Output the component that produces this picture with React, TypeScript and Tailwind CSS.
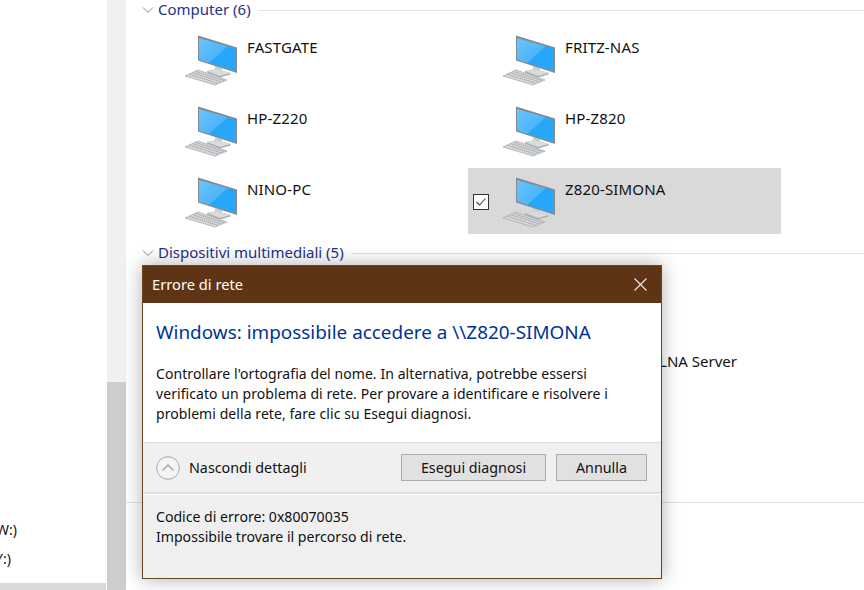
import React from "react";

function Monitor() {
  return (
    <svg width="56" height="56" viewBox="0 0 56 56" className="shrink-0">
      <defs>
        <linearGradient id="scr" x1="0" y1="0" x2="1" y2="1">
          <stop offset="0" stopColor="#6cc4fb" />
          <stop offset="0.5" stopColor="#4db5fa" />
          <stop offset="0.52" stopColor="#25a6f8" />
          <stop offset="1" stopColor="#2aa8fa" />
        </linearGradient>
      </defs>
      <path d="M31 33 L38 35 L38 40 L31 38 Z" fill="#c9ced2" />
      <path d="M23 38 L33 36 L46.500 40 L46.500 41.500 L36 44.500 L23 39.500 Z" fill="#a9adb0" />
      <path d="M23 38 L33 36 L46.500 40 L36 43 Z" fill="#d9dcde" />
      <path d="M14 2.500 L53 14.500 L53 40 L14 27.500 Z" fill="#85898d" />
      <path d="M15 5 L52 15.500 L52 38.500 L15 26.500 Z" fill="url(#scr)" />
      <path d="M1 43 L14 37 L43 47 L31 52 Z" fill="#d6d8da" stroke="#a2a5a8" strokeWidth="0.7" />
      <path d="M6 41.500 L34 50.300 M9.500 40 L37 48.800 M12.500 38.800 L40 47.500" stroke="#8f9295" strokeWidth="0.9" strokeDasharray="1.300 0.800" fill="none" />
    </svg>
  );
}

function Tile({ name, selected }: { name: string; selected?: boolean }) {
  return (
    <div className={`flex h-[66px] w-[313px] ${selected ? "bg-[#d9d9d9]" : ""}`}>
      <div className="flex w-[34px] shrink-0 items-center pl-[5px] pt-[1px]">
        {selected && (
          <div className="flex h-[16px] w-[16px] items-center justify-center border border-[#333333] bg-white">
            <svg width="12" height="10" viewBox="0 0 12 10" fill="none">
              <path d="M1.500 5 L4.500 8 L10.500 1.500" stroke="#444444" strokeWidth="1.100" />
            </svg>
          </div>
        )}
      </div>
      <div className="pt-[7px]">
        <Monitor />
      </div>
      <div className="pl-[7px] pt-[11px] text-[15px] leading-[20px] tracking-[0.15px] text-[#111111]">{name}</div>
    </div>
  );
}

function GroupHeader({ title }: { title: string }) {
  return (
    <div className="flex h-[20px] items-center">
      <svg width="12" height="8" viewBox="0 0 12 8" fill="none" className="ml-[16px] shrink-0">
        <path d="M1 1.500 L6 6.500 L11 1.500" stroke="#8a8a8a" strokeWidth="1" />
      </svg>
      <span className="-mt-[2px] ml-[4px] whitespace-nowrap text-[15px] leading-[20px] text-[#1e3287]">{title}</span>
      <div className="ml-[7px] h-px flex-1 bg-[#e2e2e2]" />
    </div>
  );
}

function Button({ label, className }: { label: string; className: string }) {
  return (
    <div className={`flex h-[27px] items-center justify-center border border-[#adadad] bg-[#e1e1e1] text-[14.3px] text-[#111111] ${className}`}>
      {label}
    </div>
  );
}

export default function App() {
  return (
    <div className="relative flex h-[590px] w-[864px] overflow-hidden bg-white font-['Noto_Sans','Open_Sans',sans-serif]">
      <aside className="flex w-[107px] shrink-0 flex-col pr-px">
        <div className="flex-1" />
        <div className="flex h-[20px] w-[17px] items-center justify-end overflow-hidden whitespace-nowrap text-[14px] text-[#111111]">
          (W:)
        </div>
        <div className="h-[9px]" />
        <div className="flex h-[20px] w-[11px] items-center justify-end overflow-hidden whitespace-nowrap text-[14px] text-[#111111]">
          (Y:)
        </div>
        <div className="h-[15px]" />
        <div className="h-[7px] bg-[#d9d9d9]" />
      </aside>
      <div className="flex w-[19px] shrink-0 flex-col bg-[#f0f0f0]">
        <div className="h-[382px]" />
        <div className="flex-1 bg-[#cdcdcd]" />
      </div>
      <main className="flex-1 pt-0">
        <GroupHeader title="Computer (6)" />
        <div className="mt-[6px] grid grid-cols-[313px_313px] gap-x-[5px] gap-y-[5px] pl-[24px]">
          <Tile name="FASTGATE" />
          <Tile name="FRITZ-NAS" />
          <Tile name="HP-Z220" />
          <Tile name="HP-Z820" />
          <Tile name="NINO-PC" />
          <Tile name="Z820-SIMONA" selected />
        </div>
        <div className="mt-[9px]">
          <GroupHeader title="Dispositivi multimediali (5)" />
        </div>
        <div className="mt-[88px] flex justify-end whitespace-nowrap pr-[127px] text-[15px] leading-[20px] text-[#111111]">
          FRITZ-NAS DLNA Server
        </div>
        <div className="mt-[131px] h-px bg-[#e2e2e2]" />
      </main>

      <div className="absolute left-[142px] top-[265px] flex h-[314px] w-[520px] flex-col border border-[#6b4423] bg-white shadow-[0_0_18px_rgba(0,0,0,0.32)]">
        <div className="flex h-[37px] shrink-0 items-center justify-between bg-[#5f3415] pl-[9px] pr-[14px] text-[14.7px] text-white">
          <span>Errore di rete</span>
          <svg width="13" height="13" viewBox="0 0 13 13" fill="none">
            <path d="M0.500 0.500 L12.500 12.500 M12.500 0.500 L0.500 12.500" stroke="#f2eeea" strokeWidth="1.100" />
          </svg>
        </div>
        <div className="flex flex-1 flex-col pl-[13px] pr-[14px]">
          <h1 className="mt-[17px] whitespace-nowrap text-[18.9px] leading-[24px] text-[#003399]">
            {"Windows: impossibile accedere a \\\\Z820-SIMONA"}
          </h1>
          <p className="mt-[20px] whitespace-nowrap text-[14px] leading-[20px] tracking-[0.07px] text-[#111111]">
            Controllare l'ortografia del nome. In alternativa, potrebbe essersi
            <br />
            verificato un problema di rete. Per provare a identificare e risolvere i
            <br />
            problemi della rete, fare clic su Esegui diagnosi.
          </p>
        </div>
        <div className="flex h-[52px] shrink-0 items-center border-t border-b-2 border-[#dfdfdf] bg-[#f0f0f0] pl-[13px] pr-[14px]">
          <svg width="24" height="24" viewBox="0 0 24 24" fill="none" className="shrink-0">
            <circle cx="12" cy="12" r="11.300" fill="#f4f4f4" stroke="#a8a8a8" strokeWidth="1" />
            <path d="M6.500 14.500 L12 9 L17.500 14.500" stroke="#a0a0a0" strokeWidth="1.400" />
          </svg>
          <span className="ml-[9px] text-[14.3px] text-[#111111]">Nascondi dettagli</span>
          <div className="ml-auto flex gap-[10px]">
            <Button label="Esegui diagnosi" className="w-[145px]" />
            <Button label="Annulla" className="w-[91px]" />
          </div>
        </div>
        <div className="h-px shrink-0 bg-white" />
        <div className="h-[83px] shrink-0 bg-[#efefef] pl-[13px] pt-[12px] text-[14.1px] leading-[20px] text-[#111111]">
          <div>Codice di errore: 0x80070035</div>
          <div>Impossibile trovare il percorso di rete.</div>
        </div>
      </div>
    </div>
  );
}
